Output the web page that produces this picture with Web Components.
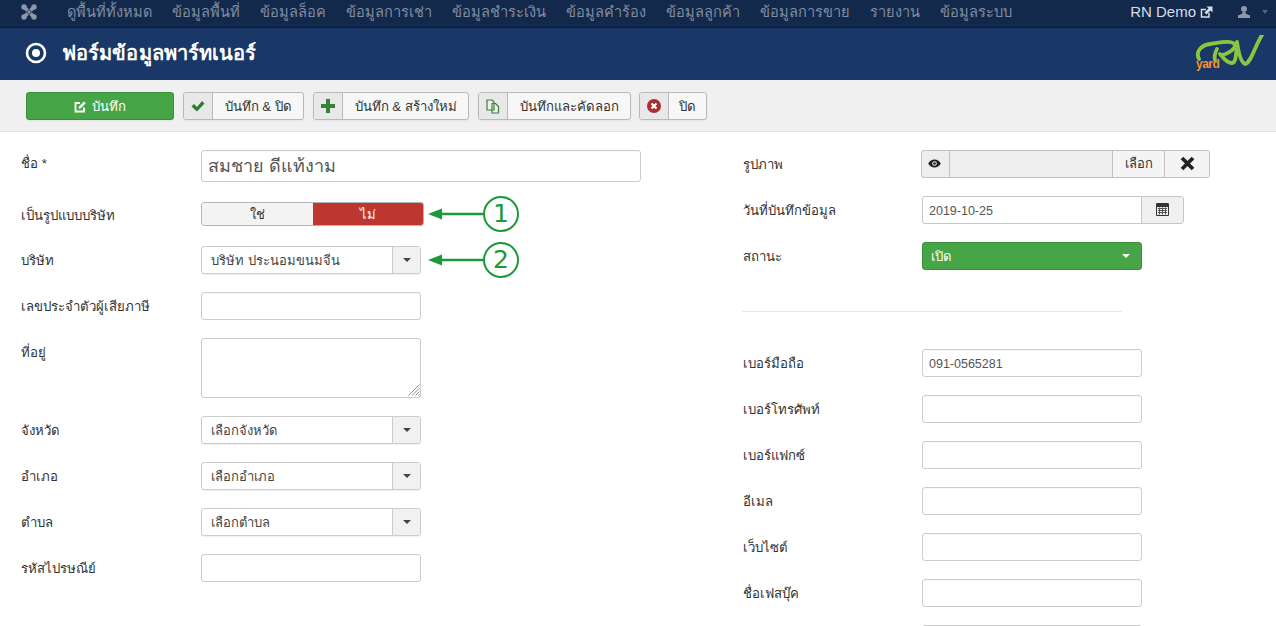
<!DOCTYPE html>
<html lang="th">
<head>
<meta charset="utf-8">
<title>ฟอร์มข้อมูลพาร์ทเนอร์</title>
<style>
  html, body { margin: 0; padding: 0; height: 626px; overflow: hidden; background: #fff; }
  body { font: 13px/18px "Liberation Sans", "Noto Sans", sans-serif; color: #333; }
</style>
</head>
<body>
<app-navbar></app-navbar>
<app-header>ฟอร์มข้อมูลพาร์ทเนอร์</app-header>
<app-toolbar>
  <tool-button primary icon="edit" style="margin-right:9px">บันทึก</tool-button>
  <tool-button icon="check" style="margin-right:9px">บันทึก &amp; ปิด</tool-button>
  <tool-button icon="plus" style="margin-right:9px">บันทึก &amp; สร้างใหม่</tool-button>
  <tool-button icon="copy" style="margin-right:8px">บันทึกและคัดลอก</tool-button>
  <tool-button icon="cancel" style="--pad:10px">ปิด</tool-button>
</app-toolbar>
<form-page>
  <form-column slot="left" style="--label:180px">
    <form-row label="ชื่อ *" gap="20" shift="0"><text-field big value="สมชาย ดีแท้งาม" width="440"></text-field></form-row>
    <form-row label="เป็นรูปแบบบริษัท" gap="17" shift="0"><yes-no></yes-no><note-mark n="1" top="-6"></note-mark></form-row>
    <form-row label="บริษัท"><select-field text="บริษัท ประนอมขนมจีน"></select-field><note-mark n="2" top="-4"></note-mark></form-row>
    <form-row label="เลขประจำตัวผู้เสียภาษี"><text-field></text-field></form-row>
    <form-row label="ที่อยู่"><area-field></area-field></form-row>
    <form-row label="จังหวัด"><select-field text="เลือกจังหวัด"></select-field></form-row>
    <form-row label="อำเภอ"><select-field text="เลือกอำเภอ"></select-field></form-row>
    <form-row label="ตำบล"><select-field text="เลือกตำบล"></select-field></form-row>
    <form-row label="รหัสไปรษณีย์"><text-field></text-field></form-row>
  </form-column>
  <form-column slot="right" style="--label:179px">
    <form-row label="รูปภาพ"><media-field></media-field></form-row>
    <form-row label="วันที่บันทึกข้อมูล"><date-field value="2019-10-25"></date-field></form-row>
    <form-row label="สถานะ" gap="41"><status-select>เปิด</status-select></form-row>
    <form-rule></form-rule>
    <form-row label="เบอร์มือถือ"><text-field value="091-0565281"></text-field></form-row>
    <form-row label="เบอร์โทรศัพท์"><text-field></text-field></form-row>
    <form-row label="เบอร์แฟกซ์"><text-field></text-field></form-row>
    <form-row label="อีเมล"><text-field></text-field></form-row>
    <form-row label="เว็บไซต์"><text-field></text-field></form-row>
    <form-row label="ชื่อเฟสบุ๊ค"><text-field></text-field></form-row>
    <form-row label=""><text-field></text-field></form-row>
  </form-column>
</form-page>

<script>
const ICONS = {
  edit: `<svg width="13" height="13" viewBox="0 0 13 13"><path d="M10 7.500V11.500H1.500V3H6" fill="none" stroke="currentColor" stroke-width="1.800"/><path d="M5 6.500L10 1.500l1.800 1.800-5 5L4.600 8.800z" fill="currentColor"/></svg>`,
  check: `<svg width="14" height="12" viewBox="0 0 14 12"><path d="M0.500 6.500l2.500-2.500 3 3L11 1l2.500 2.500L6 11.500z" fill="#2f7d32"/></svg>`,
  plus: `<svg width="14" height="14" viewBox="0 0 14 14"><path d="M5 0h4v5h5v4H9v5H5V9H0V5h5z" fill="#378137"/></svg>`,
  copy: `<svg width="14" height="15" viewBox="0 0 14 15"><path d="M1 1h5l2 2v8H1zM6 4.500h3.500l3 3V14H6z" fill="#fff" fill-opacity=".35" stroke="#378137" stroke-width="1.200"/></svg>`,
  cancel: `<svg width="14" height="14" viewBox="0 0 14 14"><circle cx="7" cy="7" r="7" fill="#ab2d2d"/><path d="M4.500 4.500l5 5M9.500 4.500l-5 5" stroke="#fff" stroke-width="2.200"/></svg>`
};

class AppNavbar extends HTMLElement {
  constructor() {
    super();
    const items = ['ดูพื้นที่ทั้งหมด','ข้อมูลพื้นที่','ข้อมูลล็อค','ข้อมูลการเช่า','ข้อมูลชำระเงิน','ข้อมูลคำร้อง','ข้อมูลลูกค้า','ข้อมูลการขาย','รายงาน','ข้อมูลระบบ'];
    this.attachShadow( {mode: 'open'} );
    this.shadowRoot.innerHTML = `
      <style>
        :host { display: flex; box-sizing: border-box; height: 28px; align-items: center; background: #13294b; border-bottom: 1px solid #0c1b33; padding: 0 8px 4px 21px; color: #808da1; font-size: 14.6px; }
        nav { display: flex; gap: 20px; margin-left: 30px; flex: 1; }
        .demo { color: #d9dde3; display: flex; align-items: center; gap: 4px; margin-right: 25px; font-size: 15px; }
        .user { display: flex; align-items: center; gap: 12px; }
        i { width: 0; height: 0; border: 3px solid transparent; border-top: 4px solid #55647c; border-bottom: 0; }
      </style>
      <svg width="16" height="16" viewBox="0 0 16 16"><g fill="#8d99ab"><circle cx="3" cy="3" r="2.700"/><circle cx="13" cy="3" r="2.700"/><circle cx="3" cy="13" r="2.700"/><circle cx="13" cy="13" r="2.700"/></g><path d="M3 3l10 10M13 3L3 13" stroke="#8d99ab" stroke-width="3.600"/><path d="M8 5.500L10.500 8 8 10.500 5.500 8z" fill="none" stroke="#13294b" stroke-width=".9"/></svg>
      <nav>${items.map( item => `<span>${item}</span>` ).join( '' )}</nav>
      <span class="demo">RN Demo
        <svg width="13" height="12" viewBox="0 0 13 12"><path d="M9 7v4H1.500V3.500H6" fill="none" stroke="#d9dde3" stroke-width="1.500"/><path d="M6.500 0.500h6v6L10.500 4.500 6.500 8.500 4.500 6.500 8.500 2.500z" fill="#d9dde3"/></svg>
      </span>
      <span class="user">
        <svg width="12" height="12" viewBox="0 0 12 12" fill="#8d99ab"><circle cx="6" cy="3" r="3"/><path d="M4.500 6h3v1.500L12 9.500V12H0V9.500L4.500 7.500z"/></svg>
        <i></i>
      </span>
    `;
  }
}
window.customElements.define( 'app-navbar', AppNavbar );

class AppHeader extends HTMLElement {
  constructor() {
    super();
    this.attachShadow( {mode: 'open'} );
    this.shadowRoot.innerHTML = `
      <style>
        :host { display: flex; box-sizing: border-box; height: 52px; align-items: center; background: #1a3867; color: #fff; padding: 0 12px 2px 25px; font-size: 20px; }
        h1 { flex: 1; margin: 0 0 0 15px; font: inherit; font-weight: 700; line-height: 26px; letter-spacing: .1px; }
        .logo { position: relative; width: 68px; height: 38px; margin-top: 2px; }
        .logo span { position: absolute; left: 0; top: 23px; color: #f0962a; font: 700 12px/12px "Liberation Sans Narrow", "Liberation Sans", sans-serif; letter-spacing: -.5px; }
      </style>
      <svg width="22" height="22" viewBox="0 0 22 22"><circle cx="11" cy="11" r="9" fill="none" stroke="#fff" stroke-width="2.600"/><circle cx="11" cy="11" r="4" fill="#fff"/></svg>
      <h1><slot></slot></h1>
      <div class="logo">
        <svg width="68" height="38" viewBox="0 0 68 38" fill="none" stroke="#8cc63f" stroke-width="3.800" stroke-linecap="round" stroke-linejoin="round">
          <path d="M3 24C-1 16 6 10 14 9c7-1 14-3 20-2 6 1 7 5 1 9-3 2-6 4-10 4"/>
          <path d="M21 14c-2 4-3 8-2 11"/>
          <path d="M24 19c3 3 6 9 12 9 5 0 4-14 5-21 1 7 3 20 8 22 6-1 10-18 17-29"/>
        </svg>
        <span>yard</span>
      </div>
    `;
  }
}
window.customElements.define( 'app-header', AppHeader );

class AppToolbar extends HTMLElement {
  constructor() {
    super();
    this.attachShadow( {mode: 'open'} );
    this.shadowRoot.innerHTML = `
      <style>
        :host { display: flex; box-sizing: border-box; height: 52px; align-items: flex-start; padding: 12px 26px 0; background: #f0f0f0; border-bottom: 1px solid #e3e3e3; }
      </style>
      <slot></slot>
    `;
  }
}
window.customElements.define( 'app-toolbar', AppToolbar );

class ToolButton extends HTMLElement {
  constructor() {
    super();
    const primary = this.hasAttribute( 'primary' );
    const icon = ICONS[this.getAttribute( 'icon' )];
    this.attachShadow( {mode: 'open'} );
    this.shadowRoot.innerHTML = `
      <style>
        :host { display: inline-flex; box-sizing: border-box; height: 28px; border: 1px solid #b9b9b9; border-radius: 3px; background: #f7f7f7; color: #333; font-size: 13.2px; box-shadow: 0 1px 2px rgba(0,0,0,.05); overflow: hidden; }
        :host([primary]) { width: 148px; justify-content: center; align-items: center; gap: 5px; background: #46a546; border-color: #3b8f3b; color: #fff; }
        .icon { width: 28px; display: flex; align-items: center; justify-content: center; background: #e8e8e8; border-right: 1px solid #b9b9b9; }
        .text { padding: 0 var(--pad, 11.500px); line-height: 28px; }
        .label { padding-top: 1px; }
        svg { display: block; }
      </style>
      ${primary
        ? `${icon}<span class="label"><slot></slot></span>`
        : `<span class="icon">${icon}</span><span class="text"><slot></slot></span>`}
    `;
  }
}
window.customElements.define( 'tool-button', ToolButton );

class FormPage extends HTMLElement {
  constructor() {
    super();
    this.attachShadow( {mode: 'open'} );
    this.shadowRoot.innerHTML = `
      <style>
        :host { display: grid; grid-template-columns: 722px 1fr; padding: 18px 0 0 21px; }
      </style>
      <slot name="left"></slot>
      <slot name="right"></slot>
    `;
  }
}
window.customElements.define( 'form-page', FormPage );

class FormColumn extends HTMLElement {
  constructor() {
    super();
    this.attachShadow( {mode: 'open'} );
    this.shadowRoot.innerHTML = `
      <style>
        :host { display: block; }
      </style>
      <slot></slot>
    `;
  }
}
window.customElements.define( 'form-column', FormColumn );

class FormRow extends HTMLElement {
  constructor() {
    super();
    const gap = this.getAttribute( 'gap' ) || 18;
    const shift = this.getAttribute( 'shift' ) || 1;
    this.attachShadow( {mode: 'open'} );
    this.shadowRoot.innerHTML = `
      <style>
        :host { display: grid; grid-template-columns: var(--label) 1fr; margin-bottom: ${gap}px; }
        label { font-size: 13.2px; line-height: 28px; padding-top: ${shift}px; color: #333; height: 27px; }
        .control { position: relative; display: flex; }
      </style>
      <label>${this.getAttribute( 'label' )}</label>
      <div class="control"><slot></slot></div>
    `;
  }
}
window.customElements.define( 'form-row', FormRow );

class TextField extends HTMLElement {
  constructor() {
    super();
    const big = this.hasAttribute( 'big' );
    this.attachShadow( {mode: 'open'} );
    this.shadowRoot.innerHTML = `
      <style>
        :host { display: block; }
        div { box-sizing: border-box; width: ${this.getAttribute( 'width' ) || 220}px; height: ${big ? 32 : 28}px; padding: 0 6px; border: 1px solid #ccc; border-radius: 3px; background: #fff; color: #555; font-size: ${big ? 18 : 12.5}px; line-height: ${big ? 30 : 28}px; box-shadow: inset 0 1px 1px rgba(0,0,0,.03); }
      </style>
      <div>${this.getAttribute( 'value' ) || ''}</div>
    `;
  }
}
window.customElements.define( 'text-field', TextField );

class AreaField extends HTMLElement {
  constructor() {
    super();
    this.attachShadow( {mode: 'open'} );
    this.shadowRoot.innerHTML = `
      <style>
        :host { display: block; position: relative; }
        textarea { display: block; box-sizing: border-box; width: 220px; height: 60px; margin: 0; border: 1px solid #ccc; border-radius: 3px; background: #fff; outline: 0; resize: none; }
        svg { position: absolute; right: 1px; bottom: 2px; }
      </style>
      <textarea></textarea>
      <svg width="12" height="12" viewBox="0 0 12 12" stroke="#8a8a8a"><path d="M0.500 11.500l11-11M4 11.500l7.500-7.500M7.500 11.500l4-4M10.500 11.500l1-1"/></svg>
    `;
  }
}
window.customElements.define( 'area-field', AreaField );

class SelectField extends HTMLElement {
  constructor() {
    super();
    this.attachShadow( {mode: 'open'} );
    this.shadowRoot.innerHTML = `
      <style>
        :host { display: flex; box-sizing: border-box; width: 220px; height: 28px; border: 1px solid #ccc; border-radius: 3px; background: #fff; color: #444; font-size: 13px; overflow: hidden; box-shadow: 0 1px 1px rgba(0,0,0,.06); }
        span { flex: 1; padding-left: 9px; line-height: 28px; }
        b { width: 27px; display: flex; align-items: center; justify-content: center; background: #f1f1f1; border-left: 1px solid #ccc; }
        i { width: 0; height: 0; border: 4px solid transparent; border-top: 4px solid #444; border-bottom: 0; }
      </style>
      <span>${this.getAttribute( 'text' )}</span>
      <b><i></i></b>
    `;
  }
}
window.customElements.define( 'select-field', SelectField );

class YesNo extends HTMLElement {
  constructor() {
    super();
    this.attachShadow( {mode: 'open'} );
    this.shadowRoot.innerHTML = `
      <style>
        :host { display: flex; box-sizing: border-box; width: 223px; height: 24px; border: 1px solid #b4b4b4; border-radius: 3px; overflow: hidden; font-size: 13px; line-height: 23px; text-align: center; }
        span { flex: 1; background: #f3f3f3; color: #333; }
        span + span { background: #bd362f; color: #fff; }
      </style>
      <span>ใช่</span><span>ไม่</span>
    `;
  }
}
window.customElements.define( 'yes-no', YesNo );

class NoteMark extends HTMLElement {
  constructor() {
    super();
    this.attachShadow( {mode: 'open'} );
    this.shadowRoot.innerHTML = `
      <style>
        :host { position: absolute; left: 226px; top: ${this.getAttribute( 'top' )}px; display: block; width: 94px; height: 38px; }
        span { position: absolute; left: 56px; top: 0; box-sizing: border-box; width: 36px; height: 36px; border: 2.500px solid #1a9a3a; border-radius: 50%; color: #1a9a3a; background: #fff; font: 25px/31px "DejaVu Sans", sans-serif; text-align: center; }
      </style>
      <svg width="60" height="36" viewBox="0 0 60 36"><path d="M14 18H58" stroke="#1a9a3a" stroke-width="2.500"/><path d="M1 18l14-5.500v11z" fill="#1a9a3a"/></svg>
      <span>${this.getAttribute( 'n' )}</span>
    `;
  }
}
window.customElements.define( 'note-mark', NoteMark );

class MediaField extends HTMLElement {
  constructor() {
    super();
    this.attachShadow( {mode: 'open'} );
    this.shadowRoot.innerHTML = `
      <style>
        :host { display: flex; box-sizing: border-box; width: 289px; height: 28px; margin-left: -1px; border: 1px solid #c2c2c2; border-radius: 3px; overflow: hidden; background: #eee; font-size: 13px; }
        span { box-sizing: border-box; }
        .eye { width: 28px; padding: 0 3px 2px 0; display: flex; align-items: center; justify-content: center; border-right: 1px solid #c2c2c2; }
        .path { flex: 1; }
        .btn { display: flex; align-items: center; justify-content: center; border-left: 1px solid #c2c2c2; background: #f4f4f4; line-height: 28px; }
        .pick { width: 52px; }
        .clear { width: 45px; padding-bottom: 2px; }
      </style>
      <span class="eye"><svg width="13" height="9" viewBox="0 0 14 10"><path d="M0 5c3-6 11-6 14 0-3 6-11 6-14 0z" fill="#222"/><circle cx="7" cy="5" r="2.600" fill="#eee"/><circle cx="7" cy="5" r="1.500" fill="#222"/></svg></span>
      <span class="path"></span>
      <span class="btn pick">เลือก</span>
      <span class="btn clear"><svg width="15" height="15" viewBox="0 0 15 15"><path d="M2 2l11 11M13 2L2 13" stroke="#222" stroke-width="3.800"/></svg></span>
    `;
  }
}
window.customElements.define( 'media-field', MediaField );

class DateField extends HTMLElement {
  constructor() {
    super();
    this.attachShadow( {mode: 'open'} );
    this.shadowRoot.innerHTML = `
      <style>
        :host { display: flex; box-sizing: border-box; width: 262px; height: 28px; border: 1px solid #c6c6c6; border-radius: 3px; overflow: hidden; background: #fff; color: #555; font-size: 12.5px; }
        span { flex: 1; padding-left: 6px; line-height: 28px; }
        b { box-sizing: border-box; width: 42px; padding-bottom: 2px; display: flex; align-items: center; justify-content: center; background: #f0f0f0; border-left: 1px solid #c6c6c6; }
      </style>
      <span>${this.getAttribute( 'value' )}</span>
      <b><svg width="13" height="13" viewBox="0 0 13 13"><rect width="13" height="13" rx="1" fill="#333"/><rect x="1" y="4" width="11" height="8" fill="#eee"/><path d="M2 5.500h9M2 7.500h9M2 9.500h9M3.500 4.500v7M6.500 4.500v7M9.500 4.500v7" stroke="#555"/></svg></b>
    `;
  }
}
window.customElements.define( 'date-field', DateField );

class StatusSelect extends HTMLElement {
  constructor() {
    super();
    this.attachShadow( {mode: 'open'} );
    this.shadowRoot.innerHTML = `
      <style>
        :host { display: flex; box-sizing: border-box; width: 220px; height: 28px; align-items: center; padding: 0 11px 0 8px; border: 1px solid #3b8f3b; border-radius: 3px; background: #46a546; color: #fff; font-size: 13px; }
        span { flex: 1; padding-top: 1px; }
        i { width: 0; height: 0; border: 4px solid transparent; border-top: 4px solid #fff; border-bottom: 0; }
      </style>
      <span><slot></slot></span><i></i>
    `;
  }
}
window.customElements.define( 'status-select', StatusSelect );

class FormRule extends HTMLElement {
  constructor() {
    super();
    this.attachShadow( {mode: 'open'} );
    this.shadowRoot.innerHTML = `
      <style>
        :host { display: block; width: 380px; height: 1px; margin-bottom: 37px; margin-left: -1px; background: #e8e8e8; }
      </style>
    `;
  }
}
window.customElements.define( 'form-rule', FormRule );
</script>
</body>
</html>
